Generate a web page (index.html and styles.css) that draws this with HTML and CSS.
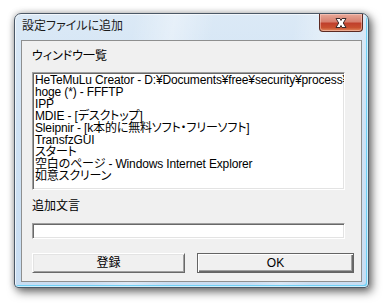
FILE: index.html
```html
<!DOCTYPE html>
<html lang="ja">
<head>
<meta charset="utf-8">
<link rel="stylesheet" href="styles.css">
</head>
<body>
<div class="window">
  <div class="titlebar">
    <span class="title">設定ファイルに追加</span>
    <div class="close">
      <svg width="20" height="12" viewBox="0 0 20 12">
        <path d="M5 1.5 L9 1.5 L10 3.5 L11 1.5 L15 1.5 L12.3 6 L15 10.5 L11 10.5 L10 8.5 L9 10.5 L5 10.5 L7.7 6 Z" fill="#fff" stroke="#3a2a2a" stroke-width="1" stroke-linejoin="round"/>
      </svg>
    </div>
  </div>
  <div class="client">
    <div class="label">ウィンドウ一覧</div>
    <div class="listbox">
      <div class="item">HeTeMuLu Creator - D:¥Documents¥free¥security¥process¥HeTeMuLu</div>
      <div class="item">hoge (*) - FFFTP</div>
      <div class="item">IPP</div>
      <div class="item">MDIE - [デスクトップ]</div>
      <div class="item">Sleipnir - [k本的に無料ソフト・フリーソフト]</div>
      <div class="item">TransfzGUI</div>
      <div class="item">スタート</div>
      <div class="item">空白のページ - Windows Internet Explorer</div>
      <div class="item">如意スクリーン</div>
    </div>
    <div class="label label2">追加文言</div>
    <div class="textbox"></div>
    <div class="buttons">
      <div class="btn btn-reg">登録</div>
      <div class="btn btn-ok">OK</div>
    </div>
  </div>
</div>
</body>
</html>
```
FILE: styles.css
```css
html, body {
  margin: 0;
  padding: 0;
  background: #ffffff;
}
body {
  width: 390px;
  height: 308px;
  overflow: hidden;
  font-family: "Liberation Sans", "Noto Sans CJK JP", sans-serif;
  font-size: 12px;
  color: #000;
}
.window {
  margin: 13px 0 0 14px;
  width: 355px;
  height: 275px;
  box-sizing: border-box;
  border: 1px solid #4b5866;
  border-radius: 7px 7px 4px 4px;
  padding: 0 6px 5px 6px;
  display: flex;
  flex-direction: column;
  background:
    linear-gradient(100deg, rgba(255,255,255,0) 30%, rgba(255,255,255,0.35) 40%, rgba(255,255,255,0) 50%, rgba(255,255,255,0) 70%, rgba(255,255,255,0.3) 78%, rgba(255,255,255,0) 86%),
    linear-gradient(180deg, #dbe9f6 0%, #cfe2f4 40%, #c8ddf2 100%);
  box-shadow:
    inset 0 0 0 1px rgba(255,255,255,0.65),
    inset -2px -2px 0 0 #6fd0f5,
    3px 4px 10px rgba(0,0,0,0.55),
    0 0 6px rgba(0,0,0,0.25);
}
.titlebar {
  height: 26px;
  display: flex;
  align-items: flex-start;
}
.title {
  flex: 1;
  padding: 5px 0 0 1px;
  line-height: 14px;
  font-size: 12px;
  color: #1a1a1a;
  font-feature-settings: "palt";
}
.close {
  width: 44px;
  height: 18px;
  margin-right: -1px;
  box-sizing: border-box;
  border: 1px solid #5c2a22;
  border-top: none;
  border-radius: 0 0 4px 4px;
  background: linear-gradient(180deg, #e8a898 0%, #d7806f 45%, #c0402c 55%, #c8502f 80%, #e28a60 100%);
  box-shadow: inset 0 0 0 1px rgba(255,220,210,0.45);
  display: flex;
  align-items: center;
  justify-content: center;
}
.close svg { display: block; }
.client {
  flex: 1;
  background: #f0f0f0;
  border: 1px solid #8e8f8f;
  padding: 8px 0 0 10px;
  display: flex;
  flex-direction: column;
  align-items: flex-start;
}
.label {
  line-height: 14px;
  height: 14px;
  font-feature-settings: "palt";
}
.label2 { margin-top: 9px; }
.listbox {
  margin-top: 9px;
  width: 313px;
  height: 118px;
  box-sizing: border-box;
  background: #fff;
  border-style: solid;
  border-width: 1px;
  border-color: #a0a0a0 #ffffff #ffffff #a0a0a0;
  box-shadow: inset 1px 1px 0 #696969, inset -1px -1px 0 #e3e3e3;
  padding: 1px 0 0 2px;
  overflow: hidden;
  white-space: nowrap;
  line-height: 12px;
  letter-spacing: -0.15px;
  font-feature-settings: "palt";
}
.item { height: 12px; }
.textbox {
  margin-top: 10px;
  width: 313px;
  height: 16px;
  box-sizing: border-box;
  background: #fff;
  border-style: solid;
  border-width: 1px;
  border-color: #a0a0a0 #ffffff #ffffff #a0a0a0;
  box-shadow: inset 1px 1px 0 #696969, inset -1px -1px 0 #e3e3e3;
}
.buttons {
  margin-top: 14px;
  display: flex;
  gap: 12px;
}
.btn {
  height: 20px;
  box-sizing: border-box;
  background: #f0f0f0;
  display: flex;
  align-items: center;
  justify-content: center;
  line-height: 14px;
  border-style: solid;
  border-width: 1px;
  border-color: #ffffff #696969 #696969 #ffffff;
  box-shadow: inset 1px 1px 0 #e3e3e3, inset -1px -1px 0 #a0a0a0;
}
.btn-reg { width: 153px; }
.btn-ok {
  width: 157px;
  border: 1px solid #646464;
  box-shadow: inset 1px 1px 0 #ffffff, inset -1px -1px 0 #696969, inset -2px -2px 0 #a0a0a0;
}
```
